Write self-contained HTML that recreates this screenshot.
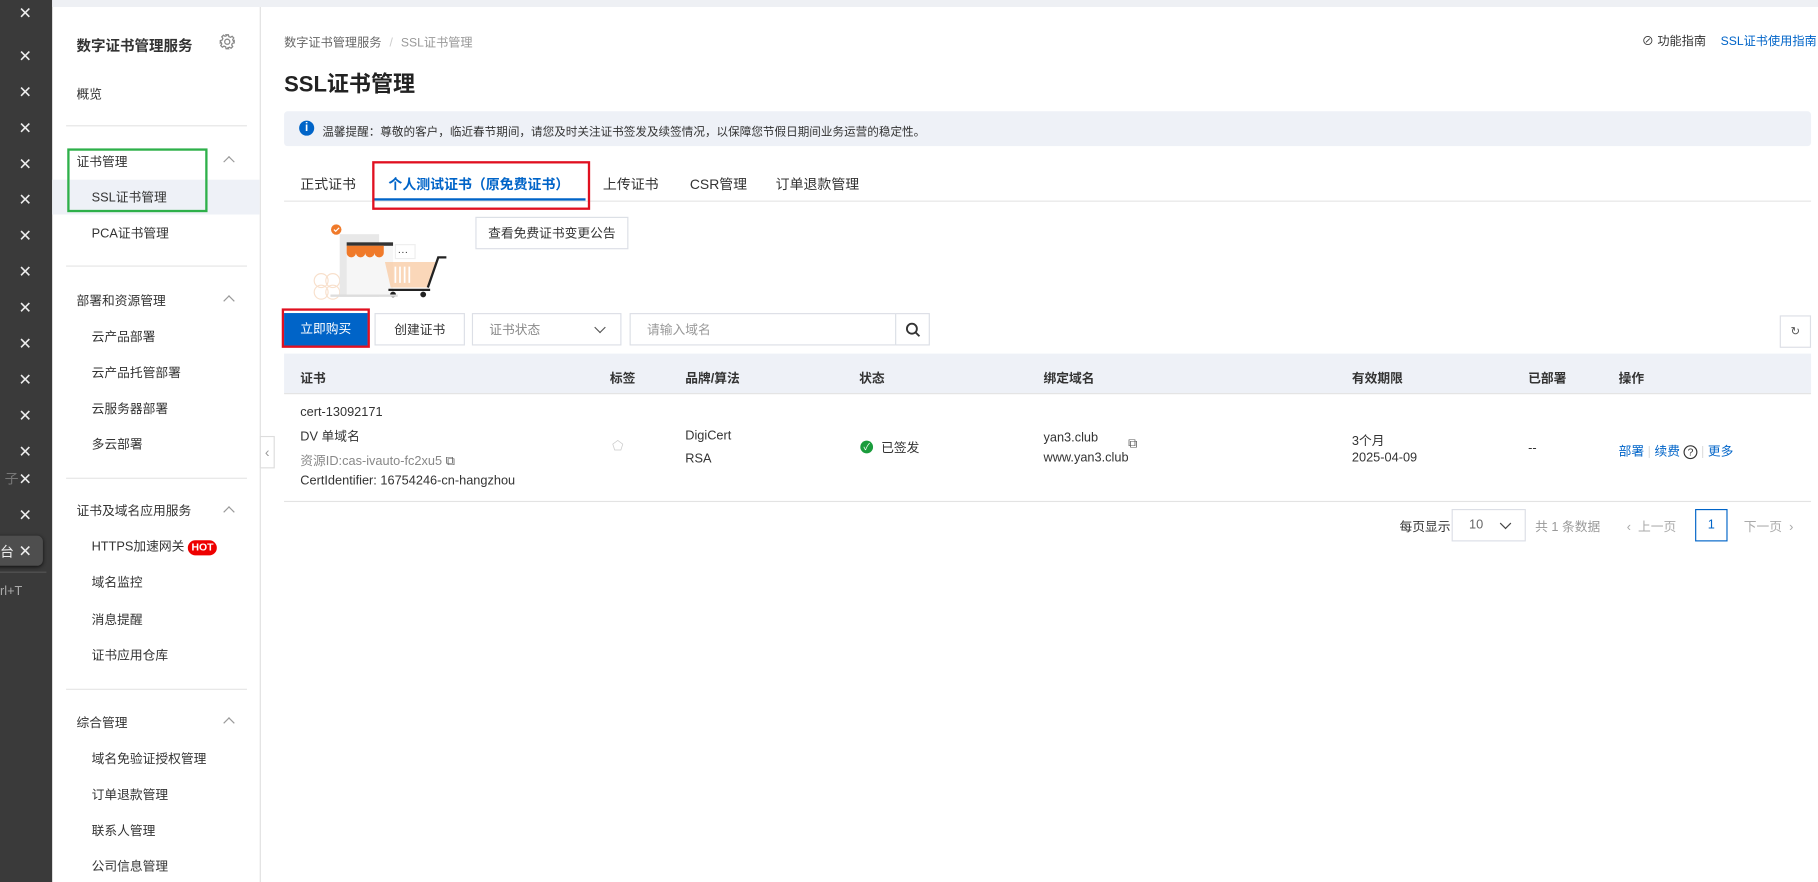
<!DOCTYPE html>
<html><head><meta charset="utf-8"><style>
*{box-sizing:border-box;margin:0;padding:0}
html,body{width:1818px;height:882px;overflow:hidden;background:#fff}
#w{position:absolute;left:0;top:0;width:1568px;height:761px;transform:scale(1.15944);transform-origin:0 0;font-family:"Liberation Sans","Noto Sans CJK SC",sans-serif;font-size:11px;color:#333}
.a{position:absolute;white-space:nowrap}
.x{position:absolute;left:16px;color:#eee;font-size:14px;line-height:14px}
.sb .a{font-size:11px;color:#333}
.div{position:absolute;left:57px;width:156px;height:1px;background:#e5e5e5}
.chev{position:absolute;width:7px;height:7px;border-left:1.3px solid #999;border-top:1.3px solid #999;transform:rotate(45deg)}
.btn{position:absolute;border:1px solid #dcdfe6;background:#fff;display:flex;align-items:center;justify-content:center}
.th{position:absolute;top:318px;font-weight:bold;color:#333}
.blue{color:#0064c8}
</style></head><body><div id="w">
<div class="a" style="left:0;top:0;width:45px;height:761px;background:#3a3a3a"></div>
<div class="x" style="top:4px">✕</div><div class="x" style="top:41px">✕</div><div class="x" style="top:72px">✕</div><div class="x" style="top:103px">✕</div><div class="x" style="top:134px">✕</div><div class="x" style="top:165px">✕</div><div class="x" style="top:196px">✕</div><div class="x" style="top:227px">✕</div><div class="x" style="top:258px">✕</div><div class="x" style="top:289px">✕</div><div class="x" style="top:320px">✕</div><div class="x" style="top:351px">✕</div><div class="x" style="top:382px">✕</div>
<div class="x" style="top:406px"><span style="position:absolute;left:-12px;color:#777;font-size:12px">子</span>✕</div>
<div class="x" style="top:437px">✕</div>
<div class="a" style="left:-8px;top:462px;width:45px;height:26px;background:#4e4e4e;border-radius:5px;box-shadow:0 1px 3px #111"></div>
<div class="a" style="left:0;top:467px;color:#eee;font-size:12px">台</div><div class="x" style="top:468px">✕</div>
<div class="a" style="left:0;top:493px;width:40px;height:1px;background:#555"></div>
<div class="a" style="left:0;top:504px;color:#aaa;font-size:11px">rl+T</div>

<div class="a" style="left:45px;top:0;width:1523px;height:6px;background:#eef0f4"></div>
<div class="a" style="left:224px;top:6px;width:1px;height:755px;background:#e0e0e0"></div>
<div class="sb">
<div class="a" style="left:66px;top:29px;font-weight:bold;font-size:12.5px">数字证书管理服务</div>
<svg class="a" style="left:189px;top:29px" width="14" height="14" viewBox="0 0 14 14" fill="none" stroke="#888" stroke-width="1.1"><circle cx="7" cy="7" r="2.2"/><path d="M6 1h2l.4 1.6 1.4.6 1.4-.9 1.4 1.4-.9 1.4.6 1.4L13 6v2l-1.6.4-.6 1.4.9 1.4-1.4 1.4-1.4-.9-1.4.6L8 13H6l-.4-1.6-1.4-.6-1.4.9-1.4-1.4.9-1.4-.6-1.4L1 8V6l1.6-.4.6-1.4-.9-1.4 1.4-1.4 1.4.9 1.4-.6z"/></svg>
<div class="a" style="left:66px;top:73px">概览</div>
<div class="div" style="top:108px"></div>
<div class="a" style="left:66px;top:131px">证书管理</div><div class="chev" style="left:194px;top:136px"></div>
<div class="a" style="left:45px;top:155px;width:179px;height:30px;background:#eef1f7"></div>
<div class="a blue" style="left:79px;top:162px">SSL证书管理</div>
<div class="a" style="left:58px;top:128px;width:121px;height:55px;border:2px solid #2eb04a"></div>
<div class="a" style="left:79px;top:193px">PCA证书管理</div>
<div class="div" style="top:229px"></div>
<div class="a" style="left:66px;top:251px">部署和资源管理</div><div class="chev" style="left:194px;top:256px"></div>
<div class="a" style="left:79px;top:282px">云产品部署</div>
<div class="a" style="left:79px;top:313px">云产品托管部署</div>
<div class="a" style="left:79px;top:344px">云服务器部署</div>
<div class="a" style="left:79px;top:375px">多云部署</div>
<div class="div" style="top:412px"></div>
<div class="a" style="left:66px;top:432px">证书及域名应用服务</div><div class="chev" style="left:194px;top:438px"></div>
<div class="a" style="left:79px;top:463px">HTTPS加速网关 <span style="display:inline-block;background:#e00;color:#fff;font-size:9px;font-weight:bold;border-radius:7px;padding:1px 3px;line-height:11px">HOT</span></div>
<div class="a" style="left:79px;top:494px">域名监控</div>
<div class="a" style="left:79px;top:526px">消息提醒</div>
<div class="a" style="left:79px;top:557px">证书应用仓库</div>
<div class="div" style="top:594px"></div>
<div class="a" style="left:66px;top:615px">综合管理</div><div class="chev" style="left:194px;top:620px"></div>
<div class="a" style="left:79px;top:646px">域名免验证授权管理</div>
<div class="a" style="left:79px;top:677px">订单退款管理</div>
<div class="a" style="left:79px;top:708px">联系人管理</div>
<div class="a" style="left:79px;top:739px">公司信息管理</div>
</div>
<div class="a" style="left:224px;top:376px;width:13px;height:28px;border:1px solid #ddd;background:#fff;color:#999;font-size:12px;line-height:26px;text-align:center">‹</div>

<div class="a" style="left:245px;top:29px;color:#666;font-size:10.5px">数字证书管理服务 <span style="color:#ccc;margin:0 4px">/</span> <span style="color:#999">SSL证书管理</span></div>
<div class="a" style="left:245px;top:58px;font-size:19px;font-weight:bold;color:#222">SSL证书管理</div>
<div class="a" style="left:1416px;top:28px;color:#333;font-size:10.5px">⊘ 功能指南</div>
<div class="a blue" style="left:1484px;top:28px;font-size:10.5px">SSL证书使用指南</div>
<div class="a" style="left:245px;top:96px;width:1317px;height:30px;background:#eef1f7;border-radius:3px"></div>
<div class="a" style="left:258px;top:104px;width:13px;height:13px;border-radius:50%;background:#0064c8;color:#fff;font-size:10px;font-weight:bold;text-align:center;line-height:13px">i</div>
<div class="a" style="left:278px;top:105px;font-size:10px">温馨提醒：尊敬的客户，临近春节期间，请您及时关注证书签发及续签情况，以保障您节假日期间业务运营的稳定性。</div>

<div class="a" style="left:245px;top:173px;width:1317px;height:1px;background:#e5e5e5"></div>
<div class="a" style="left:259px;top:150px;font-size:12px">正式证书</div>
<div class="a blue" style="left:335px;top:150px;font-size:12px;font-weight:bold">个人测试证书（原免费证书）</div>
<div class="a" style="left:323px;top:171px;width:182px;height:2px;background:#0064c8"></div>
<div class="a" style="left:321px;top:139px;width:188px;height:42px;border:2px solid #e01020"></div>
<div class="a" style="left:520px;top:150px;font-size:12px">上传证书</div>
<div class="a" style="left:595px;top:150px;font-size:12px">CSR管理</div>
<div class="a" style="left:669px;top:150px;font-size:12px">订单退款管理</div>

<svg class="a" style="left:265px;top:190px" width="125" height="70" viewBox="0 0 125 70">
<circle cx="12" cy="52" r="6" fill="none" stroke="#f8e0cc"/><circle cx="22" cy="52" r="6" fill="none" stroke="#f8e0cc"/><circle cx="12" cy="62" r="6" fill="none" stroke="#f8e0cc"/><circle cx="22" cy="62" r="6" fill="none" stroke="#f8e0cc"/>
<rect x="28" y="12" width="34" height="54" fill="#e8e8e8"/><rect x="34" y="20" width="40" height="46" fill="#f6f6f6"/>
<rect x="34" y="19" width="40" height="3" fill="#333"/>
<path d="M34 22h8v6a4 4 0 0 1-8 0zM42 22h8v6a4 4 0 0 1-8 0zM50 22h8v6a4 4 0 0 1-8 0zM58 22h8v6a4 4 0 0 1-8 0z" fill="#f07a2a"/>
<circle cx="25" cy="8" r="4.5" fill="#f07a2a"/><path d="M23 8l1.5 1.5 3-3" stroke="#fff" fill="none"/>
<rect x="76" y="21" width="17" height="12" fill="#fff" stroke="#eee"/><text x="78" y="30" font-size="9" fill="#333">···</text>
<path d="M67 36h45l-8 22H72z" fill="#f9cda8" opacity=".8"/><path d="M104 58l9-26h7" stroke="#222" stroke-width="2" fill="none"/><path d="M70 60h36" stroke="#222" stroke-width="2"/>
<circle cx="74" cy="64" r="2.5" fill="#222"/><circle cx="100" cy="64" r="2.5" fill="#222"/>
<path d="M76 40v14M80 40v14M84 40v14M88 40v14" stroke="#fff" stroke-width="1.5"/>
<rect x="20" y="64" width="58" height="2" fill="#ddd"/></svg>
<div class="btn" style="left:410px;top:187px;width:132px;height:28px">查看免费证书变更公告</div>

<div class="a" style="left:245px;top:270px;width:72px;height:28px;background:#0064c8;color:#fff;text-align:center;line-height:28px">立即购买</div>
<div class="a" style="left:243px;top:266px;width:76px;height:34px;border:2px solid #e01020"></div>
<div class="btn" style="left:323px;top:270px;width:78px;height:28px">创建证书</div>
<div class="btn" style="left:407px;top:270px;width:129px;height:28px;justify-content:flex-start;padding-left:14px;color:#888">证书状态<span class="chev" style="left:106px;top:8px;transform:rotate(-135deg);border-color:#555"></span></div>
<div class="btn" style="left:543px;top:270px;width:230px;height:28px;justify-content:flex-start;padding-left:14px;color:#999">请输入域名</div>
<div class="btn" style="left:772px;top:270px;width:30px;height:28px"><svg width="13" height="13" viewBox="0 0 13 13" fill="none" stroke="#333" stroke-width="1.6"><circle cx="5.5" cy="5.5" r="4.3"/><path d="M8.7 8.7l3.3 3.3"/></svg></div>
<div class="btn" style="left:1535px;top:272px;width:27px;height:28px;color:#555;font-size:10px">↻</div>

<div class="a" style="left:245px;top:305px;width:1317px;height:34px;background:#eef1f7"></div>
<div class="a" style="left:245px;top:339px;width:1317px;height:1px;background:#e3e3e3"></div>
<div class="th" style="left:259px">证书</div><div class="th" style="left:526px">标签</div><div class="th" style="left:591px">品牌/算法</div><div class="th" style="left:741px">状态</div><div class="th" style="left:900px">绑定域名</div><div class="th" style="left:1166px">有效期限</div><div class="th" style="left:1318px">已部署</div><div class="th" style="left:1396px">操作</div>
<div class="a" style="left:259px;top:350px">cert-13092171</div>
<div class="a" style="left:259px;top:368px">DV 单域名</div>
<div class="a" style="left:259px;top:389px;color:#888">资源ID:cas-ivauto-fc2xu5 <span style="color:#555">⧉</span></div>
<div class="a" style="left:259px;top:409px">CertIdentifier: 16754246-cn-hangzhou</div>
<div class="a" style="left:528px;top:378px;color:#ccc;font-size:11px">⬠</div>
<div class="a" style="left:591px;top:370px">DigiCert</div><div class="a" style="left:591px;top:390px">RSA</div>
<div class="a" style="left:742px;top:380px;width:11px;height:11px;border-radius:50%;background:#1a9c3c;color:#fff;font-size:8px;text-align:center;line-height:11px">✓</div>
<div class="a" style="left:760px;top:378px">已签发</div>
<div class="a" style="left:900px;top:372px">yan3.club</div><div class="a" style="left:900px;top:389px">www.yan3.club</div>
<div class="a" style="left:973px;top:377px;color:#555">⧉</div>
<div class="a" style="left:1166px;top:372px">3个月</div><div class="a" style="left:1166px;top:389px">2025-04-09</div>
<div class="a" style="left:1318px;top:381px">--</div>
<div class="a blue" style="left:1396px;top:381px">部署 <span style="color:#ddd">|</span> 续费 <span style="display:inline-block;width:12px;height:12px;border:1px solid #333;border-radius:50%;font-size:9px;text-align:center;line-height:10px;color:#333">?</span> <span style="color:#ddd">|</span> 更多</div>
<div class="a" style="left:245px;top:432px;width:1317px;height:1px;background:#e3e3e3"></div>

<div class="a" style="left:1207px;top:446px">每页显示</div>
<div class="btn" style="left:1252px;top:439px;width:64px;height:28px;justify-content:flex-start;padding-left:14px;color:#666">10<span class="chev" style="left:42px;top:8px;transform:rotate(-135deg);border-color:#444"></span></div>
<div class="a" style="left:1324px;top:446px;color:#999">共 1 条数据</div>
<div class="a" style="left:1403px;top:446px;color:#aaa">‹ &nbsp;上一页</div>
<div class="a" style="left:1462px;top:439px;width:28px;height:28px;border:1px solid #0064c8;color:#0064c8;text-align:center;line-height:26px">1</div>
<div class="a" style="left:1504px;top:446px;color:#aaa">下一页 &nbsp;›</div>
</div></body></html>
